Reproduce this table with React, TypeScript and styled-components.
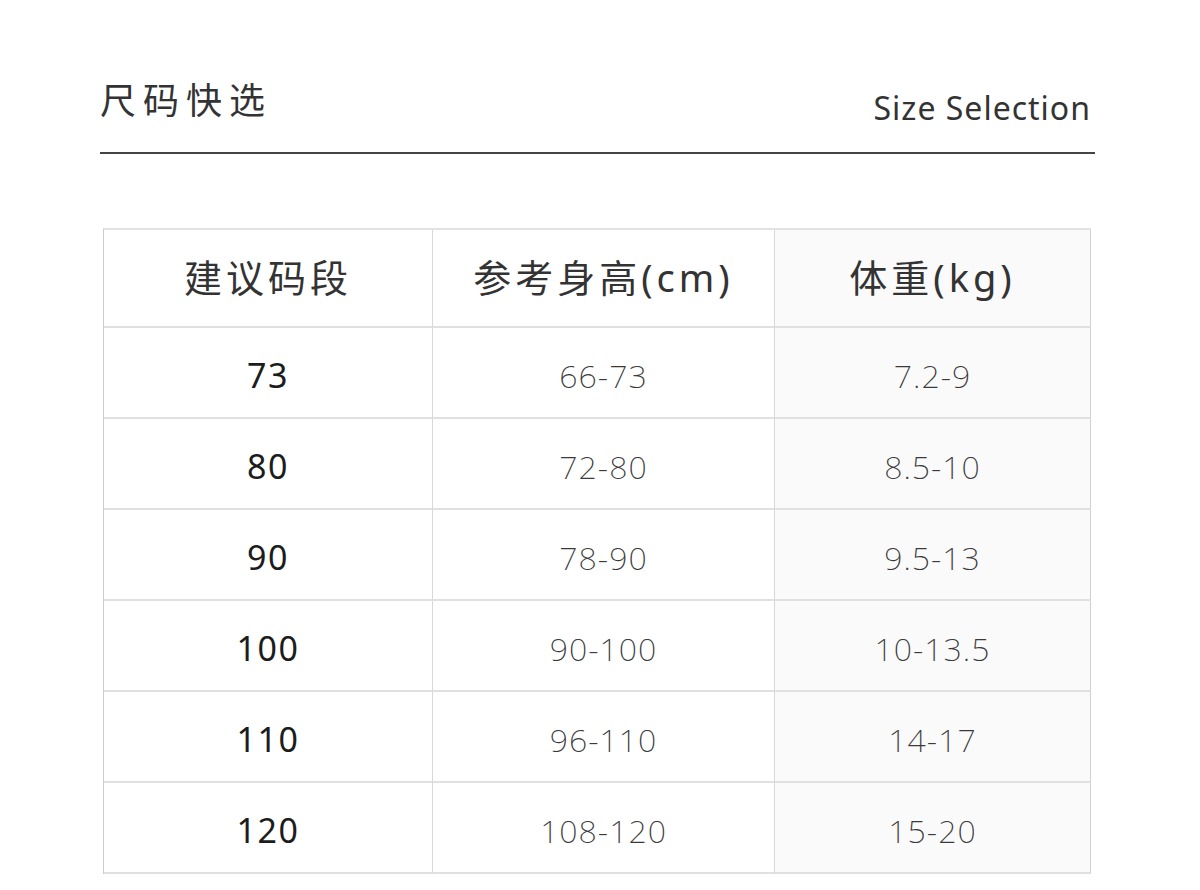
import React from 'react'
import styled, { createGlobalStyle } from 'styled-components'

const GlobalStyle = createGlobalStyle`
  html, body {
    margin: 0;
    padding: 0;
    background: #ffffff;
  }
  body {
    font-family: 'Noto Sans', 'Noto Sans CJK SC', sans-serif;
    color: #333333;
  }
`

type Row = { size: string; height: string; weight: string }

const rows: Row[] = [
  { size: '73', height: '66-73', weight: '7.2-9' },
  { size: '80', height: '72-80', weight: '8.5-10' },
  { size: '90', height: '78-90', weight: '9.5-13' },
  { size: '100', height: '90-100', weight: '10-13.5' },
  { size: '110', height: '96-110', weight: '14-17' },
  { size: '120', height: '108-120', weight: '15-20' },
]

export default function App() {
  return (
    <Page>
      <GlobalStyle />
      <Header>
        <Title>尺码快选</Title>
        <Subtitle>Size Selection</Subtitle>
      </Header>
      <Table>
        <HeadCell>建议码段</HeadCell>
        <HeadCell>参考身高(cm)</HeadCell>
        <HeadCell $shaded $last>体重(kg)</HeadCell>
        {rows.map((r) => (
          <React.Fragment key={r.size}>
            <SizeCell>{r.size}</SizeCell>
            <ValueCell>{r.height}</ValueCell>
            <ValueCell $shaded $last>{r.weight}</ValueCell>
          </React.Fragment>
        ))}
      </Table>
    </Page>
  )
}

const Page = styled.div`
  width: 1200px;
  height: 890px;
  box-sizing: border-box;
  padding: 74px 105px 0 100px;
  overflow: hidden;
`

const Header = styled.div`
  display: flex;
  justify-content: space-between;
  align-items: flex-end;
  height: 80px;
  padding: 0 4px 0 0;
  border-bottom: 2px solid #444444;
  box-sizing: border-box;
`

const Title = styled.h1`
  margin: 0 0 36px;
  font-family: 'Noto Sans CJK SC', sans-serif;
  font-size: 36px;
  font-weight: 400;
  letter-spacing: 7px;
  line-height: 1;
  color: #333333;
`

const Subtitle = styled.div`
  margin: 0 0 28px;
  font-family: 'Noto Sans', sans-serif;
  font-size: 32px;
  font-weight: 400;
  letter-spacing: 1px;
  line-height: 1;
  color: #333333;
`

const Table = styled.div`
  display: grid;
  grid-template-columns: 329px 342px 316px;
  grid-template-rows: 98px repeat(6, 91px);
  margin: 74px 0 0 3px;
  width: 988px;
  border-top: 2px solid #e2e2e2;
  border-left: 1px solid #cccccc;
  box-sizing: border-box;
`

const Cell = styled.div<{ $shaded?: boolean; $last?: boolean }>`
  display: flex;
  align-items: center;
  justify-content: center;
  background: ${({ $shaded }) => ($shaded ? '#fafafa' : '#ffffff')};
  border-right: 1px solid ${({ $last }) => ($last ? '#d0d0d0' : '#d8d8d8')};
  border-bottom: 2px solid #e0e0e0;
  color: #333333;
`

const HeadCell = styled(Cell)`
  font-family: 'Noto Sans', 'Noto Sans CJK SC', sans-serif;
  font-size: 38px;
  font-weight: 400;
  letter-spacing: 4px;
  padding-bottom: 6px;
`

const SizeCell = styled(Cell)`
  font-family: 'Noto Sans', sans-serif;
  font-size: 34px;
  font-weight: 400;
  letter-spacing: 1.5px;
  color: #1c1c1c;
  padding-top: 5px;
`

const ValueCell = styled(Cell)`
  font-family: 'Noto Sans', sans-serif;
  font-size: 32px;
  font-weight: 200;
  letter-spacing: 1px;
  color: #3a3a3a;
  padding-top: 5px;
`
